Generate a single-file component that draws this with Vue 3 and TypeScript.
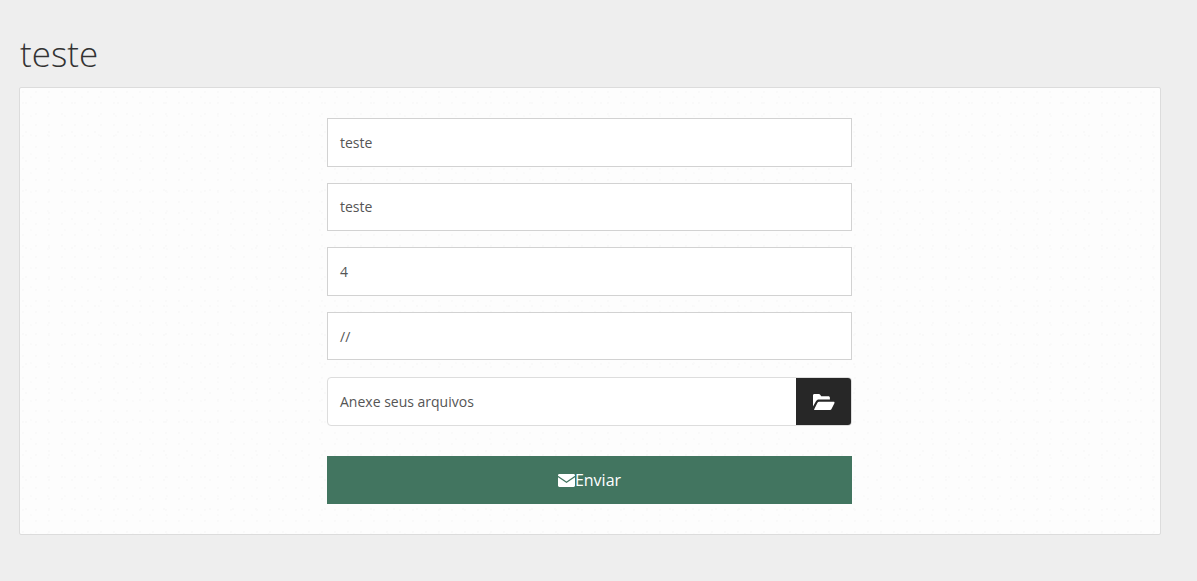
<script setup lang="ts">
const fields: string[] = ['teste', 'teste', '4', '//']
</script>

<template>
  <div class="page">
    <h1 class="title">teste</h1>
    <div class="panel">
      <form class="form" @submit.prevent>
        <div v-for="(value, i) in fields" :key="i" class="field">{{ value }}</div>
        <div class="file-row">
          <span class="file-label">Anexe seus arquivos</span>
          <span class="file-btn">
            <svg width="23" height="18" viewBox="0 0 23 18" aria-hidden="true">
              <path fill="#fff" d="M1 15.4V2.4C1 1.6 1.6 1 2.4 1h4.3c.8 0 1.3.4 1.7 1l.8 1.2h7.2c.9 0 1.5.6 1.5 1.5v1.7H6.8c-1.2 0-2.1.6-2.7 1.6L1 13.4z" />
              <path fill="#fff" d="M2.2 16.2 5.3 10c.4-.8 1-1.2 1.9-1.2h14.3c.9 0 1.3.7.9 1.4l-2.9 5.7c-.4.8-1 1.1-1.8 1.1H3.1c-.8 0-1.2-.1-.9-.8z" />
            </svg>
          </span>
        </div>
        <button type="button" class="send">
          <svg width="17" height="13" viewBox="0 0 17 13" aria-hidden="true">
            <path fill="#fff" d="M0 1.4C0 .6.6 0 1.4 0h14.2c.8 0 1.4.6 1.4 1.4v.3L8.5 7.4 0 1.7z" />
            <path fill="#fff" d="M0 3.3v8.3c0 .8.6 1.4 1.4 1.4h14.2c.8 0 1.4-.6 1.4-1.4V3.3L8.5 9z" />
          </svg>
          <span>Enviar</span>
        </button>
      </form>
    </div>
  </div>
</template>

<style scoped>
.page {
  height: 581px;
  box-sizing: border-box;
  padding: 0 36px 0 19px;
  background: #eee;
  font-family: "Open Sans", sans-serif;
  overflow: hidden;
}

.title {
  margin: 0;
  padding: 33px 0 0 1px;
  height: 54px;
  box-sizing: content-box;
  font-size: 35px;
  line-height: 41px;
  font-weight: 300;
  color: #333;
}

.panel {
  height: 448px;
  box-sizing: border-box;
  padding-top: 30px;
  background-color: #fdfdfd;
  background-image:
    radial-gradient(circle at 3px 4px, #f9f9f9 0.7px, transparent 1px),
    radial-gradient(circle at 11px 9px, #fafafa 0.7px, transparent 1px),
    radial-gradient(circle at 6px 15px, #f9f9f9 0.7px, transparent 1px);
  background-size: 13px 11px, 17px 19px, 23px 29px;
  border: 1px solid #dcdcdc;
  border-radius: 2px;
}

.form {
  width: 525px;
  margin-left: 307px;
  display: flex;
  flex-direction: column;
}

.field {
  height: 48.6px;
  box-sizing: border-box;
  margin-bottom: 16px;
  padding: 0 12px;
  display: flex;
  align-items: center;
  background: #fff;
  border: 1px solid #d2d2d2;
  font-size: 14px;
  color: #555;
}

.file-row {
  height: 49px;
  box-sizing: border-box;
  margin-top: 1px;
  display: flex;
  align-items: center;
  background: #fff;
  border: 1px solid #ddd;
  border-radius: 4px;
  overflow: hidden;
}

.file-label {
  flex: 1;
  padding-left: 12px;
  font-size: 14px;
  color: #555;
}

.file-btn {
  width: 55px;
  height: 100%;
  display: flex;
  align-items: center;
  justify-content: center;
  background: #272727;
}

.send {
  height: 48px;
  margin-top: 30px;
  display: flex;
  align-items: center;
  justify-content: center;
  border: none;
  background: #427560;
  color: #fff;
  font-family: inherit;
  font-size: 16px;
}
</style>

<style>
html, body { margin: 0; background: #eee; }
</style>
